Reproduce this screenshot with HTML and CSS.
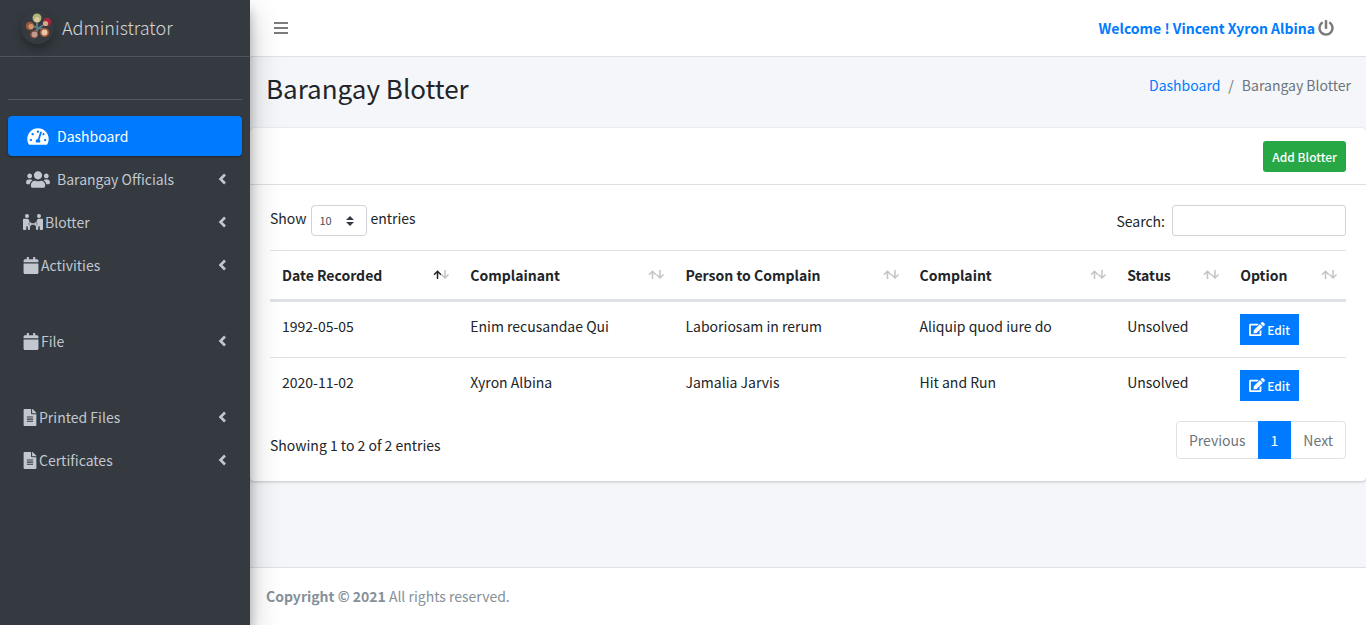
FILE: index.html
```html
<!DOCTYPE html>
<html lang="en">
<head>
<meta charset="utf-8">
<meta name="viewport" content="width=device-width, initial-scale=1">
<title>Barangay Blotter</title>
<link rel="stylesheet" href="styles.css">
</head>
<body>
<svg class="sprite" aria-hidden="true">
  <symbol id="i-gauge" viewBox="0 0 576 512"><path d="M288 32C128.94 32 0 160.94 0 320c0 52.8 14.25 102.26 39.06 144.8 5.61 9.62 16.3 15.2 27.44 15.2h443c11.14 0 21.83-5.58 27.44-15.2C561.75 422.26 576 372.8 576 320c0-159.06-128.94-288-288-288zm0 64c14.71 0 26.58 10.13 30.32 23.65-1.11 2.26-2.64 4.23-3.45 6.67l-9.22 27.67c-5.13 3.49-10.97 6.01-17.64 6.01-17.67 0-32-14.33-32-32S270.33 96 288 96zM96 384c-17.67 0-32-14.33-32-32s14.33-32 32-32 32 14.33 32 32-14.33 32-32 32zm48-160c-17.67 0-32-14.33-32-32s14.33-32 32-32 32 14.33 32 32-14.33 32-32 32zm246.77-72.41l-61.33 184C343.13 347.33 352 364.54 352 384c0 11.72-3.38 22.55-8.88 32H232.88c-5.5-9.45-8.88-20.28-8.88-32 0-33.94 26.5-61.43 59.9-63.59l61.34-184.01c4.17-12.56 17.73-19.45 30.36-15.17 12.57 4.19 19.35 17.79 15.17 30.36zm14.66 57.2l15.52-46.55c3.47-1.29 7.13-2.23 11.05-2.23 17.67 0 32 14.33 32 32s-14.33 32-32 32c-11.38-.01-21.27-6.05-26.57-15.22zM480 384c-17.67 0-32-14.33-32-32s14.33-32 32-32 32 14.33 32 32-14.33 32-32 32z"/></symbol>
  <symbol id="i-users" viewBox="0 0 640 512"><path d="M96 224c35.3 0 64-28.7 64-64s-28.7-64-64-64-64 28.7-64 64 28.7 64 64 64zm448 0c35.3 0 64-28.7 64-64s-28.7-64-64-64-64 28.7-64 64 28.7 64 64 64zm32 32h-64c-17.6 0-33.5 7.1-45.1 18.6 40.3 22.1 68.9 62 75.1 109.4h66c17.7 0 32-14.3 32-32v-32c0-35.3-28.7-64-64-64zm-256 0c61.9 0 112-50.1 112-112S381.9 32 320 32 208 82.1 208 144s50.1 112 112 112zm76.8 32h-8.3c-20.8 10-43.9 16-68.5 16s-47.6-6-68.5-16h-8.3C179.6 288 128 339.6 128 403.2V432c0 26.5 21.5 48 48 48h288c26.5 0 48-21.5 48-48v-28.8c0-63.6-51.6-115.2-115.2-115.2zm-223.7-13.4C161.5 263.1 145.6 256 128 256H64c-35.3 0-64 28.7-64 64v32c0 17.7 14.3 32 32 32h65.9c6.3-47.4 34.9-87.3 75.2-109.4z"/></symbol>
  <symbol id="i-carry" viewBox="0 0 640 512"><circle cx="128" cy="64" r="64"/><circle cx="512" cy="64" r="64"/><path d="M32 150h110c22 0 36 10 44 30l32 84-52 56 44 40c10 10 14 20 14 34v88c0 18-12 30-30 30h-8c-18 0-30-12-30-30v-66l-50-42v108c0 18-12 30-30 30H30c-18 0-30-12-30-30V182c0-18 14-32 32-32zM608 150H498c-22 0-36 10-44 30l-32 84 52 56-44 40c-10 10-14 20-14 34v88c0 18 12 30 30 30h8c18 0 30-12 30-30v-66l50-42v108c0 18 12 30 30 30h46c18 0 30-12 30-30V182c0-18-14-32-32-32z"/><path d="M182 320l78-76v50h120v-50l78 76-78 76v-50H260v50z"/></symbol>
  <symbol id="i-calendar" viewBox="0 0 448 512"><path d="M12 192h424c6.600 0 12 5.400 12 12v260c0 26.500-21.500 48-48 48H48c-26.500 0-48-21.500-48-48V204c0-6.600 5.400-12 12-12zm436-44v-36c0-26.500-21.500-48-48-48h-48V12c0-6.600-5.400-12-12-12h-40c-6.600 0-12 5.400-12 12v52H160V12c0-6.600-5.400-12-12-12h-40c-6.600 0-12 5.400-12 12v52H48C21.500 64 0 85.500 0 112v36c0 6.600 5.400 12 12 12h424c6.600 0 12-5.400 12-12z"/></symbol>
  <symbol id="i-file" viewBox="0 0 384 512"><path d="M224 136V0H24C10.700 0 0 10.700 0 24v464c0 13.300 10.700 24 24 24h336c13.300 0 24-10.700 24-24V160H248c-13.200 0-24-10.800-24-24zm64 236c0 6.600-5.400 12-12 12H108c-6.600 0-12-5.400-12-12v-8c0-6.600 5.400-12 12-12h168c6.600 0 12 5.400 12 12v8zm0-64c0 6.600-5.400 12-12 12H108c-6.600 0-12-5.400-12-12v-8c0-6.600 5.400-12 12-12h168c6.600 0 12 5.400 12 12v8zm0-72v8c0 6.600-5.400 12-12 12H108c-6.600 0-12-5.400-12-12v-8c0-6.600 5.400-12 12-12h168c6.600 0 12 5.400 12 12zm96-114.100v6.100H256V0h6.100c6.400 0 12.500 2.500 17 7l97.900 98c4.500 4.500 7 10.600 7 16.900z"/></symbol>
  <symbol id="i-left" viewBox="0 0 8 12"><path d="M7 1.500 2.500 6 7 10.500" fill="none" stroke="currentColor" stroke-width="2.600"/></symbol>
  <symbol id="i-power" viewBox="0 0 512 512"><path d="M400 54.100c63 45 104 118.600 104 201.900 0 136.800-110.800 247.700-247.500 248C120 504.300 8.200 393 8 256.400 7.900 173.100 48.900 99.300 111.800 54.200c11.700-8.300 28-4.800 35 7.700L162.600 90c5.900 10.500 3.100 23.800-6.600 31-41.500 30.800-68 79.600-68 134.900-.1 92.300 74.500 168.100 168 168.100 91.600 0 168.600-74.200 168-169.100-.3-51.800-24.700-101.800-68.100-134-9.700-7.200-12.400-20.500-6.500-30.900l15.800-28.100c7-12.400 23.200-16.100 34.800-7.800zM296 264V24c0-13.300-10.700-24-24-24h-32c-13.300 0-24 10.700-24 24v240c0 13.300 10.700 24 24 24h32c13.300 0 24-10.700 24-24z"/></symbol>
  <symbol id="i-edit" viewBox="0 0 576 512"><path d="M402.600 83.200l90.200 90.200c3.800 3.800 3.800 10 0 13.800L274.400 405.600l-92.800 10.300c-12.400 1.400-22.900-9.100-21.500-21.500l10.300-92.800L388.800 83.200c3.800-3.800 10-3.800 13.800 0zm162-22.900l-48.800-48.800c-15.200-15.200-39.900-15.200-55.200 0l-35.400 35.400c-3.800 3.800-3.800 10 0 13.800l90.200 90.200c3.800 3.800 10 3.800 13.800 0l35.400-35.400c15.200-15.300 15.200-40 0-55.200zM384 346.200V448H64V128h229.800c3.200 0 6.200-1.300 8.500-3.500l40-40c7.600-7.600 2.200-20.500-8.500-20.500H48C21.500 64 0 85.500 0 112v352c0 26.500 21.500 48 48 48h352c26.500 0 48-21.500 48-48V306.200c0-10.700-12.900-16-20.500-8.500l-40 40c-2.200 2.300-3.500 5.300-3.500 8.500z"/></symbol>
  <symbol id="i-sort" viewBox="0 0 16 10"><g fill="none" stroke="currentColor" stroke-width="1.500"><path class="up" d="M4.500 9V1.500M1 4.700l3.500-3.500L8 4.700"/><path class="down" d="M12 0v7.500M8.500 4.500 12 8l3.500-3.500"/></g></symbol>
</svg>
<div class="layout">
  <aside class="sidebar">
    <a class="brand" href="#">
      <svg class="logo" viewBox="0 0 33 33" aria-hidden="true">
        <circle cx="16.500" cy="16.500" r="16.500" fill="#343a40"/>
        <path d="M16 9v14M11 15l11 3M12 22l10-8" stroke="#5d7a80" stroke-width="2"/>
        <circle cx="16" cy="7" r="4.500" fill="#b3b477"/><circle cx="16" cy="8.500" r="2.600" fill="#dcc8a0"/>
        <circle cx="26" cy="11" r="4.200" fill="#a5263a"/><circle cx="24.500" cy="12.500" r="2.600" fill="#d9a98e"/>
        <circle cx="9" cy="15" r="4.300" fill="#9a5a38"/><circle cx="10" cy="15.500" r="2.600" fill="#d0946f"/>
        <circle cx="13" cy="23.500" r="4.300" fill="#6d463b"/><circle cx="13.500" cy="23.500" r="3" fill="#c6998a"/>
        <circle cx="23.500" cy="21.500" r="4.600" fill="#a8583a"/><circle cx="23.500" cy="21.500" r="3" fill="#ecc5a6"/>
      </svg>
      <span>Administrator</span>
    </a>
    <div class="user-panel"></div>
    <nav class="menu">
      <a class="item wide active" href="#"><svg class="icon gauge"><use href="#i-gauge"/></svg><span>Dashboard</span></a>
      <a class="item wide" href="#"><svg class="icon users"><use href="#i-users"/></svg><span>Barangay Officials</span><svg class="arrow"><use href="#i-left"/></svg></a>
      <a class="item" href="#"><svg class="icon carry"><use href="#i-carry"/></svg><span>Blotter</span><svg class="arrow"><use href="#i-left"/></svg></a>
      <a class="item" href="#"><svg class="icon calendar"><use href="#i-calendar"/></svg><span>Activities</span><svg class="arrow"><use href="#i-left"/></svg></a>
      <a class="item spaced" href="#"><svg class="icon calendar"><use href="#i-calendar"/></svg><span>File</span><svg class="arrow"><use href="#i-left"/></svg></a>
      <a class="item spaced" href="#"><svg class="icon file"><use href="#i-file"/></svg><span>Printed Files</span><svg class="arrow"><use href="#i-left"/></svg></a>
      <a class="item" href="#"><svg class="icon file"><use href="#i-file"/></svg><span>Certificates</span><svg class="arrow"><use href="#i-left"/></svg></a>
    </nav>
  </aside>
  <div class="page">
    <header class="topbar">
      <button class="toggle" type="button" aria-label="Toggle menu"><svg viewBox="0 0 14 12"><path d="M0 1h14M0 6h14M0 11h14" stroke="currentColor" stroke-width="2"/></svg></button>
      <div class="account"><a href="#">Welcome ! Vincent Xyron Albina</a><button class="power" type="button" aria-label="Log out"><svg><use href="#i-power"/></svg></button></div>
    </header>
    <main class="content">
      <div class="heading">
        <h1>Barangay Blotter</h1>
        <nav class="crumbs" aria-label="Breadcrumb"><a href="#">Dashboard</a><span>/</span><span>Barangay Blotter</span></nav>
      </div>
      <section class="card">
        <div class="card-header"><button class="btn add" type="button">Add Blotter</button></div>
        <div class="card-body">
          <div class="controls">
            <div class="length"><label for="length">Show</label><select id="length"><option>10</option><option>25</option><option>50</option></select><span>entries</span></div>
            <div class="search"><label for="search">Search:</label><input id="search" type="search"></div>
          </div>
          <table>
            <colgroup><col class="c-date"><col class="c-name"><col class="c-person"><col class="c-complaint"><col class="c-status"><col class="c-option"></colgroup>
            <thead><tr>
              <th><div class="th">Date Recorded<svg class="sort asc"><use href="#i-sort"/></svg></div></th>
              <th><div class="th">Complainant<svg class="sort"><use href="#i-sort"/></svg></div></th>
              <th><div class="th">Person to Complain<svg class="sort"><use href="#i-sort"/></svg></div></th>
              <th><div class="th">Complaint<svg class="sort"><use href="#i-sort"/></svg></div></th>
              <th><div class="th">Status<svg class="sort"><use href="#i-sort"/></svg></div></th>
              <th><div class="th">Option<svg class="sort"><use href="#i-sort"/></svg></div></th>
            </tr></thead>
            <tbody>
              <tr><td>1992-05-05</td><td>Enim recusandae Qui</td><td>Laboriosam in rerum</td><td>Aliquip quod iure do</td><td>Unsolved</td><td><button class="btn edit" type="button"><svg><use href="#i-edit"/></svg>Edit</button></td></tr>
              <tr><td>2020-11-02</td><td>Xyron Albina</td><td>Jamalia Jarvis</td><td>Hit and Run</td><td>Unsolved</td><td><button class="btn edit" type="button"><svg><use href="#i-edit"/></svg>Edit</button></td></tr>
            </tbody>
          </table>
          <div class="table-foot">
            <div class="info">Showing 1 to 2 of 2 entries</div>
            <nav class="pager" aria-label="Pages"><a href="#">Previous</a><a class="current" href="#">1</a><a href="#">Next</a></nav>
          </div>
        </div>
      </section>
    </main>
    <footer class="footer"><strong>Copyright © 2021</strong> All rights reserved.</footer>
  </div>
</div>
</body>
</html>
```

FILE: styles.css
```css
* { box-sizing: border-box; }

body {
  margin: 0;
  color: #212529;
  background: #f4f6f9;
  font-family: "Noto Sans CJK SC", "Noto Sans", sans-serif;
  font-size: 14px;
  font-weight: 400;
  line-height: 24px;
}

a { color: #007bff; text-decoration: none; }
strong { font-weight: 700; }
button, select, input { font: inherit; margin: 0; }
svg { fill: currentColor; flex: none; }
.sprite { position: absolute; width: 0; height: 0; }

.layout { display: flex; min-height: 100vh; }

.sidebar {
  position: relative;
  width: 250px;
  flex: none;
  background: #343a40;
  color: #c2c7d0;
  box-shadow: 0 14px 28px rgba(0, 0, 0, .25), 0 10px 10px rgba(0, 0, 0, .22);
}
.brand {
  display: flex;
  align-items: center;
  gap: 8px;
  height: 57px;
  padding: 0 21px 2px;
  border-bottom: 1px solid #4b545c;
  color: rgba(255, 255, 255, .8);
  font-size: 18px;
  font-weight: 300;
}
.logo {
  width: 33px;
  height: 33px;
  border-radius: 50%;
  box-shadow: 0 5px 10px rgba(0, 0, 0, .3);
}
.user-panel { height: 43px; margin: 0 8px 16px; border-bottom: 1px solid #4f5962; }
.menu { display: flex; flex-direction: column; gap: 3px; padding: 0 8px; }
.item {
  display: flex;
  align-items: center;
  gap: 2px;
  height: 40px;
  padding: 0 16px 0 15px;
  border-radius: 4px;
  color: #c2c7d0;
}
.item.spaced { margin-top: 33px; }
.item.wide { gap: 5px; padding-left: 16px; }
.item.active {
  color: #fff;
  background: #007bff;
  box-shadow: 0 1px 3px rgba(0, 0, 0, .12), 0 1px 2px rgba(0, 0, 0, .24);
}
.icon { height: 16px; }
.gauge, .users { width: 28px; height: 19px; }
.carry { width: 20px; }
.calendar { width: 16px; height: 17px; }
.file { width: 14px; height: 17px; }
.arrow { width: 8px; height: 12px; margin-left: auto; }

.page { display: flex; flex: 1; flex-direction: column; min-width: 0; }
.topbar {
  display: flex;
  align-items: center;
  justify-content: space-between;
  height: 57px;
  padding: 0 32px 0 24px;
  background: #fff;
  border-bottom: 1px solid #dee2e6;
}
.toggle, .power { display: flex; padding: 0; border: 0; background: none; color: #7b7b7b; }
.toggle svg { width: 14px; height: 12px; }
.power svg { width: 16px; height: 16px; }
.account { display: flex; align-items: center; gap: 3px; font-weight: 700; }

.content { flex: 1; }
.heading {
  display: flex;
  justify-content: space-between;
  padding: 13px 15px 23px 16px;
}
h1 { margin: 0; font-size: 26px; font-weight: 400; line-height: 35px; }
.crumbs { display: flex; gap: 8px; padding-top: 3px; color: #6c757d; }

.card {
  background: #fff;
  border-radius: 4px;
  box-shadow: 0 0 1px rgba(0, 0, 0, .13), 0 1px 3px rgba(0, 0, 0, .2);
}
.card-header {
  display: flex;
  justify-content: flex-end;
  padding: 13px 20px 12px;
  border-bottom: 1px solid rgba(0, 0, 0, .125);
}
.card-body { padding: 20px 20px 22px; }
.btn {
  display: inline-flex;
  align-items: center;
  justify-content: center;
  gap: 2px;
  height: 31px;
  padding: 0 8px 1px;
  border: 1px solid transparent;
  color: #fff;
  font-size: 12px;
  font-weight: 500;
  line-height: 21px;
}
.add { background: #28a745; border-radius: 3px; }
.edit { display: flex; background: #007bff; }
.edit svg { width: 16px; height: 14px; }

.controls { display: flex; justify-content: space-between; margin-bottom: 14px; }
.length { display: flex; align-items: flex-start; gap: 4px; line-height: 27px; }
.search { display: flex; align-items: center; gap: 7px; }
.length select {
  appearance: none;
  width: 56px;
  height: 31px;
  padding: 0 8px 1px;
  border: 1px solid #ced4da;
  border-radius: 4px;
  color: #495057;
  font-size: 11px;
  background: #fff url("data:image/svg+xml,%3Csvg xmlns='http://www.w3.org/2000/svg' viewBox='0 0 4 5'%3E%3Cpath fill='%23343a40' d='M2 0L0 2h4zm0 5L0 3h4z'/%3E%3C/svg%3E") right 12px center / 8px 10px no-repeat;
}
.search input {
  width: 174px;
  height: 31px;
  padding: 4px 8px;
  border: 1px solid #ced4da;
  border-radius: 3px;
  background: #fff;
}

table { width: 100%; table-layout: fixed; border-collapse: separate; border-spacing: 0; }
.c-date { width: 17.5%; }
.c-name { width: 20%; }
.c-person { width: 21.75%; }
.c-complaint { width: 19.3%; }
.c-status { width: 10.5%; }
.c-option { width: 10.95%; }
th, td { padding: 12px; border-top: 1px solid #dee2e6; text-align: left; vertical-align: top; }
th { padding-right: 9px; border-bottom: 2px solid #dee2e6; font-weight: 700; }
.th { display: flex; align-items: center; justify-content: space-between; }
.sort { width: 16px; height: 10px; color: #c4c4c4; }
.asc { --up: #212529; }
.up { stroke: var(--up, currentColor); }

.table-foot { display: flex; align-items: flex-start; justify-content: space-between; padding-top: 8px; }
.info { padding-top: 12px; }
.pager { display: flex; border: 1px solid #dee2e6; border-radius: 4px; }
.pager a { padding: 6px 12px; color: #6c757d; }
.pager .current { margin: -1px 0; padding: 7px 13px; color: #fff; background: #007bff; }

.footer {
  padding: 16px 16px 17px;
  border-top: 1px solid #dee2e6;
  background: #fff;
  color: #869099;
}
```
